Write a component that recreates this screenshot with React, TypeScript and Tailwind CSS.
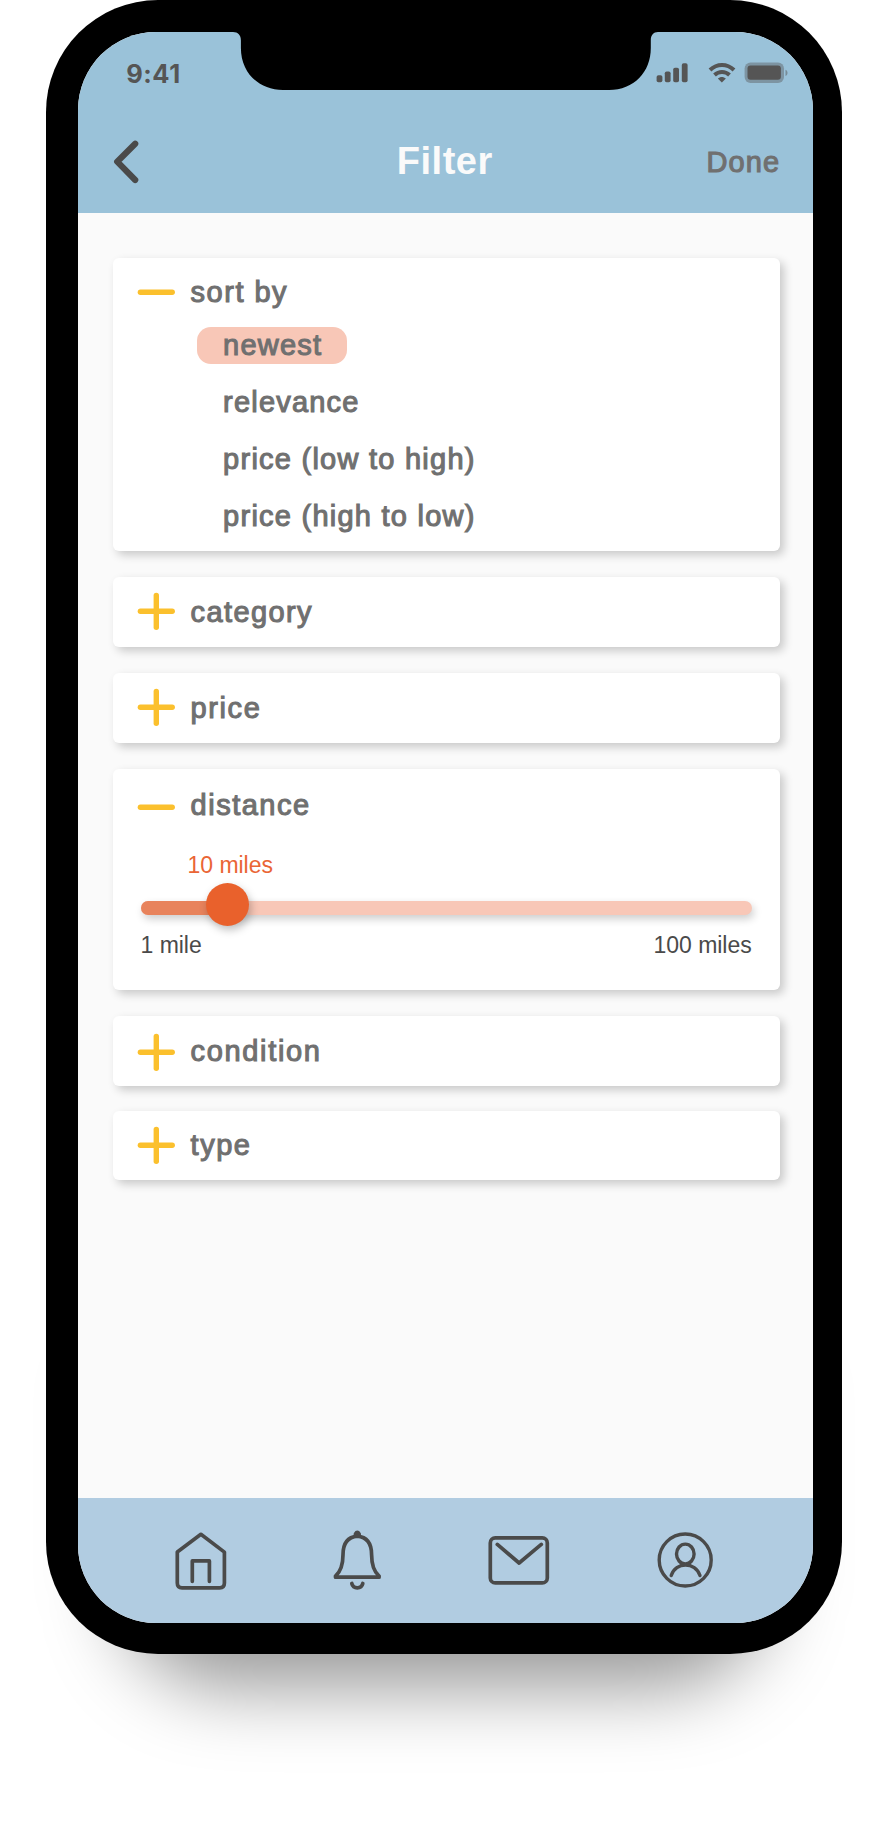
import React from "react";

const label =
  "text-[29px] leading-[40px] text-[#707070] [-webkit-text-stroke:1.1px_#707070] whitespace-nowrap";

function Toggle({ open, className = "" }: { open?: boolean; className?: string }) {
  return (
    <svg
      viewBox="0 0 40 40"
      className={`size-10 shrink-0 ${className}`}
      fill="none"
      stroke="#fbc02d"
      strokeWidth="5.4"
      strokeLinecap="round"
    >
      <path d="M4.4 20.2H36.2" />
      {!open && <path d="M20.3 4.4V36.2" />}
    </svg>
  );
}

type SectionProps = {
  title: string;
  open?: boolean;
  className: string;
  iconClass?: string;
  titleClass?: string;
  children?: React.ReactNode;
};

function Section({ title, open, className, iconClass = "mt-[14px]", titleClass = "mt-[14px]", children }: SectionProps) {
  return (
    <section
      className={`w-[667px] shrink-0 rounded-[6px] bg-white shadow-[4px_4px_10px_rgba(0,0,0,0.2)] ${className}`}
    >
      <div className="flex items-start gap-[14.5px] pl-[23.5px]">
        <Toggle open={open} className={iconClass} />
        <h2 className={`${label} ${titleClass}`}>{title}</h2>
      </div>
      {children}
    </section>
  );
}

function StatusIcons() {
  return (
    <svg viewBox="0 0 134 24" className="h-6 w-[134px]" fill="#555">
      <rect x="0.6" y="14.2" width="5.8" height="7" rx="1.8" />
      <rect x="8.8" y="10.5" width="5.8" height="10.7" rx="1.8" />
      <rect x="17.2" y="6.7" width="5.8" height="14.5" rx="1.8" />
      <rect x="25.8" y="2.2" width="5.8" height="19" rx="1.8" />
      <g fill="none" stroke="#555" strokeWidth="4">
        <path d="M54 9C61 2.3 71 2.3 78 9" />
        <path d="M58.500 14C62.900 10 69.100 10 73.500 14" />
      </g>
      <path d="M61.800 17.500C64.300 15.400 67.400 15.400 69.900 17.500L65.850 21.500Z" />
      <rect x="88.600" y="1.400" width="39.400" height="20.600" rx="6" fillOpacity="0.42" />
      <rect x="91.500" y="4.600" width="33.400" height="14.200" rx="3" />
      <path d="M129.500 8.700C132.200 9.900 132.200 13.700 129.500 15Z" fillOpacity="0.5" />
    </svg>
  );
}

function Notch() {
  return (
    <svg viewBox="0 0 427 60" className="absolute left-[154px] top-[-1px] h-[60px] w-[427px]" fill="#000">
      <path d="M0 0H427V1H426C421.5 1 418.8 4 418.8 9.5V17C418.8 41 402 59 377 59H51C26 59 8.9 41 8.9 17V9.5C8.9 4 6 1 1 1H0Z" />
    </svg>
  );
}

function TabBar() {
  return (
    <nav className="flex h-[125.5px] shrink-0 items-start bg-[#b1cce1] pl-[94px] pt-[30.5px] text-[#4a4a4a]">
      <svg viewBox="0 0 60 64" className="h-16 w-[60px]" fill="none" stroke="currentColor" strokeWidth="3.7" strokeLinecap="round" strokeLinejoin="round">
        <path d="M28.9 6.3L52.4 24.1V55.1Q52.4 59.8 47.7 59.8H10Q5.3 59.8 5.3 55.1V24.1Z" />
        <path d="M20.3 53.3V32.900H37.400V53.300" />
      </svg>
      <svg viewBox="0 0 60 64" className="ml-[97px] h-16 w-[60px]" fill="none" stroke="currentColor" strokeWidth="3.7" strokeLinecap="round" strokeLinejoin="round">
        <path d="M28.3 8.2C18 9.2 14 16.2 14 26.7C14 36.7 12 43.2 6.500 48.100V49.200H50.100V48.100C44.500 43.200 42.600 36.700 42.600 26.700C42.600 16.200 38.500 9.200 28.300 8.200Z" />
        <path d="M26.500 7.900V5.900Q28.300 2.900 30.100 5.900V7.900Z" fill="currentColor" />
        <path d="M22.800 55.500C24.200 61.200 32.400 61.200 33.800 55.500" />
      </svg>
      <svg viewBox="0 0 66 64" className="ml-[95px] h-16 w-[66px]" fill="none" stroke="currentColor" strokeWidth="3.7" strokeLinecap="round" strokeLinejoin="round">
        <rect x="6.300" y="9.900" width="57" height="45" rx="5" />
        <path d="M13.300 16.400L35.100 35L57.300 16.400" />
      </svg>
      <svg viewBox="0 0 62 64" className="ml-[101px] h-16 w-[62px]" fill="none" stroke="currentColor" strokeWidth="3.4" strokeLinecap="round">
        <circle cx="34.200" cy="32" r="26" />
        <ellipse cx="34.300" cy="26" rx="8.800" ry="9.900" />
        <path d="M20.200 47.600C24.500 33.400 44.500 33.400 49 47.600" />
      </svg>
    </nav>
  );
}

export default function App() {
  return (
    <main className="h-[1822px] w-[890px] overflow-hidden bg-white pl-[46px] font-['Liberation_Sans',Arial,sans-serif]">
      <div className="relative isolate h-[1653.5px] w-[796px]">
        <div className="absolute bottom-[-34px] left-[72px] -z-10 h-[400px] w-[652px] rounded-[110px] bg-black/40 blur-[38px]" />
        <div className="h-full rounded-[112px] bg-black pb-[30.5px] pl-[32.3px] pr-[28.7px] pt-8">
          <div className="relative flex h-full flex-col overflow-hidden rounded-[78px] bg-[#fafafa]">
            <header className="h-[181px] shrink-0 bg-[#9ac2d9]">
              <Notch />
              <div className="flex h-[72px] items-start justify-between pl-12 pr-[23px]">
                <time className="mt-[26px] font-['Inter',sans-serif] text-[25.5px] font-bold leading-8 tracking-[0.5px] text-[#555]">
                  9:41
                </time>
                <div className="mt-[29px]">
                  <StatusIcons />
                </div>
              </div>
              <div className="grid grid-cols-3 items-start pl-[31px] pr-[33px]">
                <svg viewBox="0 0 34 48" className="mt-[34px] h-12 w-[34px]" fill="none" stroke="#4a4a4a" strokeWidth="6.2" strokeLinecap="round" strokeLinejoin="round">
                  <path d="M26.2 5.8L8.2 23.7L26.2 42" />
                </svg>
                <h1 className="mt-[33px] text-center text-[38px] font-bold leading-[48px] tracking-[0.5px] text-[#fafafa]">Filter</h1>
                <button className={`${label} mt-[38px] text-right tracking-[1.1px]`}>Done</button>
              </div>
            </header>

            <div className="flex min-h-0 flex-1 flex-col pl-[34.3px] pt-[44.5px]">
              <Section title="sort by" open className="h-[293.5px]" titleClass="mt-[14px] tracking-[1.5px]">
                <ul className="pl-[84.5px]">
                  <li className={`${label} mt-[15.5px] flex h-[37px] w-[149.5px] items-center rounded-[14px] bg-[#f8c7b7] pb-px pl-[26px] tracking-[1.2px]`}>
                    newest
                  </li>
                  <li className={`${label} mt-[18px] pl-[26px] tracking-[1.2px]`}>relevance</li>
                  <li className={`${label} mt-[17px] pl-[26px] tracking-[1.25px]`}>price (low to high)</li>
                  <li className={`${label} mt-[17px] pl-[26px] tracking-[1.25px]`}>price (high to low)</li>
                </ul>
              </Section>
              <Section title="category" className="mt-[26px] h-[70px]" titleClass="mt-[15px] tracking-[1.4px]" />
              <Section title="price" className="mt-[26px] h-[70px]" titleClass="mt-[15px] tracking-[1.6px]" />
              <Section title="distance" open className="mt-[26px] h-[221px]" iconClass="mt-[17.5px]" titleClass="mt-[16px] tracking-[1.5px]">
                <div className="flex flex-col px-[28px]">
                  <output className="ml-[47px] mt-[24.5px] text-[23px] leading-[28px] tracking-[-0.05px] text-[#ea6535]">10 miles</output>
                  <div className="mt-[7.5px] flex h-[43px] items-center">
                    <div className="relative flex h-[14px] w-full items-center rounded-[7px] bg-[#f8c7b7] shadow-[2px_4px_9px_rgba(0,0,0,0.2)]">
                      <div className="h-full w-[88px] rounded-l-[7px] bg-[#e8835c]" />
                      <div className="absolute left-[65.5px] top-[-18px] size-[43px] rounded-full bg-[#e9612c] shadow-[2px_4px_9px_rgba(0,0,0,0.25)]" />
                    </div>
                  </div>
                  <div className="mt-[1.5px] flex justify-between text-[23px] leading-[28px] tracking-[-0.05px] text-[#4a4a4a]">
                    <span>1 mile</span>
                    <span>100 miles</span>
                  </div>
                </div>
              </Section>
              <Section title="condition" className="mt-[26px] h-[70px]" iconClass="mt-[15.5px]" titleClass="mt-[15px] tracking-[1.65px]" />
              <Section title="type" className="mt-[24.5px] h-[69.5px]" titleClass="mt-[14.5px] tracking-[1.5px]" />
            </div>

            <TabBar />
          </div>
        </div>
      </div>
    </main>
  );
}
